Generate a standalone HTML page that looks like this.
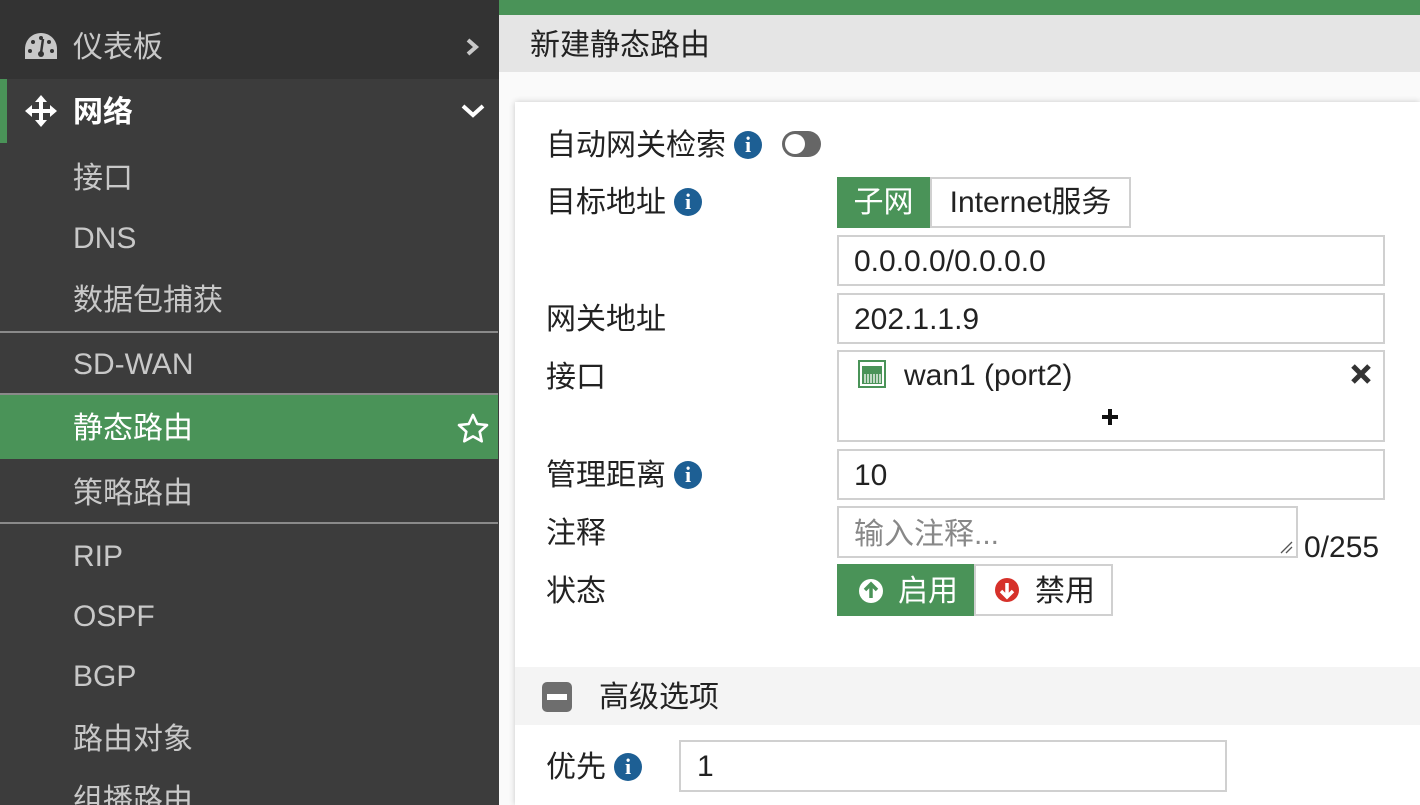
<!DOCTYPE html>
<html><head><meta charset="utf-8"><style>
*{margin:0;padding:0;box-sizing:border-box}
html,body{width:1420px;height:805px;overflow:hidden}
body{position:relative;background:#fafafa;font-family:"Liberation Sans","Noto Sans CJK SC",sans-serif;font-size:30px;color:#222}
.a{position:absolute}
#sb{left:0;top:0;width:499px;height:805px;background:#3c3c3c}
.it{position:absolute;left:73px;color:#c8c8c8;font-size:30px;line-height:34px}
.sep{position:absolute;left:0;width:498px;height:2px;background:#8a8a8a}
.lbl{position:absolute;left:546px;font-size:30px;line-height:34px;color:#222}
.box{position:absolute;border:2px solid #d0d0d0;background:#fff;font-size:30px;padding-left:15px;color:#222}
.info{display:inline-block;width:28px;height:28px;border-radius:50%;background:#1d5f94;color:#fff;font:bold 22px/28px "Liberation Serif",serif;text-align:center;vertical-align:3px;margin-left:8px}
</style></head><body>
<div id="sb" class="a">
 <div class="a" style="left:0;top:0;width:499px;height:79px;background:#333"></div>
 <svg class="a" style="left:25px;top:33px" width="32" height="28" viewBox="0 0 32 28"><path d="M16 0C7 0 0 7 0 16v10h32V16C32 7 25 0 16 0z" fill="#c8c8c8"/><circle cx="5" cy="18" r="2" fill="#333"/><circle cx="8" cy="9" r="2" fill="#333"/><circle cx="27" cy="18" r="2" fill="#333"/><circle cx="24" cy="9" r="2" fill="#333"/><circle cx="16" cy="5" r="2" fill="#333"/><path d="M18 6l-2 14" stroke="#333" stroke-width="2.5"/><circle cx="16" cy="21" r="3" fill="#333"/></svg>
 <div class="it" style="top:31px">仪表板</div>
 <svg class="a" style="left:464px;top:37px" width="16" height="20"><path d="M4 3l8 7-8 7" stroke="#c8c8c8" stroke-width="4" fill="none"/></svg>
 <div class="a" style="left:0;top:79px;width:7px;height:64px;background:#4a9358"></div>
 <svg class="a" style="left:25px;top:95px" width="32" height="32" viewBox="0 0 32 32"><path d="M16 0l6 7h-4v7h7v-4l7 6-7 6v-4h-7v7h4l-6 7-6-7h4v-7H7v4l-7-6 7-6v4h7V7h-4z" fill="#fff"/></svg>
 <div class="it" style="top:96px;color:#fff;font-weight:bold">网络</div>
 <svg class="a" style="left:460px;top:102px" width="26" height="18"><path d="M3 4l10 9 10-9" stroke="#fff" stroke-width="4" fill="none"/></svg>
 <div class="it" style="top:162px">接口</div>
 <div class="it" style="top:222px">DNS</div>
 <div class="it" style="top:284px">数据包捕获</div>
 <div class="sep" style="top:331px"></div>
 <div class="it" style="top:348px">SD-WAN</div>
 <div class="sep" style="top:393px"></div>
 <div class="a" style="left:0;top:395px;width:498px;height:64px;background:#4a9358"></div>
 <div class="it" style="top:412px;color:#fff">静态路由</div>
 <svg class="a" style="left:457px;top:413px" width="32" height="30" viewBox="0 0 32 30"><path d="M16 2l4.2 9 9.8 1.1-7.3 6.6 2 9.6L16 23.4l-8.7 4.9 2-9.6L2 12.1 11.8 11z" stroke="#fff" stroke-width="2.6" fill="none" stroke-linejoin="round"/></svg>
 <div class="it" style="top:477px">策略路由</div>
 <div class="sep" style="top:522px"></div>
 <div class="it" style="top:540px">RIP</div>
 <div class="it" style="top:600px">OSPF</div>
 <div class="it" style="top:660px">BGP</div>
 <div class="it" style="top:723px">路由对象</div>
 <div class="it" style="top:784px">组播路由</div>
</div>
<div class="a" style="left:499px;top:0;width:921px;height:15px;background:#4a9358"></div>
<div class="a" style="left:499px;top:15px;width:921px;height:57px;background:#e5e5e5"></div>
<div class="a" style="left:530px;top:29px;font-size:30px;line-height:34px;color:#222">新建静态路由</div>
<div class="a" style="left:515px;top:102px;width:905px;height:703px;background:#fff;box-shadow:0 0 6px rgba(0,0,0,.2)"></div>
<div class="lbl" style="top:129px">自动网关检索<span class="info">i</span></div>
<div class="a" style="left:782px;top:131px;width:39px;height:26px;border-radius:13px;background:#666"></div>
<div class="a" style="left:785px;top:134px;width:20px;height:20px;border-radius:50%;background:#fff"></div>
<div class="lbl" style="top:186px">目标地址<span class="info">i</span></div>
<div class="a" style="left:837px;top:177px;width:93px;height:51px;background:#4a9358;color:#fff;font-size:30px;line-height:51px;text-align:center">子网</div>
<div class="a" style="left:930px;top:177px;width:201px;height:51px;border:2px solid #d0d0d0;font-size:30px;line-height:47px;text-align:center">Internet服务</div>
<div class="box" style="left:837px;top:235px;width:548px;height:51px;line-height:49px">0.0.0.0/0.0.0.0</div>
<div class="lbl" style="top:303px">网关地址</div>
<div class="box" style="left:837px;top:293px;width:548px;height:51px;line-height:49px">202.1.1.9</div>
<div class="lbl" style="top:361px">接口</div>
<div class="box" style="left:837px;top:350px;width:548px;height:92px"></div>
<svg class="a" style="left:858px;top:360px" width="28" height="28" viewBox="0 0 28 28"><rect x="1" y="1" width="26" height="26" fill="#fff" stroke="#4a9358" stroke-width="2"/><rect x="4" y="6" width="20" height="18" fill="#4a9358"/><path d="M7 14v9M10 14v9M13 14v9M16 14v9M19 14v9M22 14v9" stroke="#fff" stroke-width="1.3"/></svg>
<div class="a" style="left:904px;top:359px;font-size:30px;line-height:34px">wan1 (port2)</div>
<svg class="a" style="left:1349px;top:362px" width="24" height="24"><path d="M4 4l16 16M20 4L4 20" stroke="#333" stroke-width="5"/></svg>
<svg class="a" style="left:1101px;top:408px" width="18" height="18"><path d="M9 1v16M1 9h16" stroke="#111" stroke-width="4"/></svg>
<div class="lbl" style="top:459px">管理距离<span class="info">i</span></div>
<div class="box" style="left:837px;top:449px;width:548px;height:51px;line-height:49px">10</div>
<div class="lbl" style="top:517px">注释</div>
<div class="box" style="left:837px;top:506px;width:461px;height:52px;line-height:54px;color:#888">输入注释...</div>
<svg class="a" style="left:1278px;top:539px" width="16" height="16"><path d="M3 14L14 3M8 14l6-6" stroke="#555" stroke-width="1.3"/></svg>
<div class="a" style="left:1304px;top:531px;font-size:30px;line-height:34px">0/255</div>
<div class="lbl" style="top:575px">状态</div>
<div class="a" style="left:837px;top:564px;width:137px;height:52px;background:#4a9358"></div>
<svg class="a" style="left:858px;top:578px" width="26" height="26" viewBox="0 0 26 26"><circle cx="13" cy="13" r="12" fill="#fff"/><path d="M13 20V7M7 12l6-6 6 6" stroke="#4a9358" stroke-width="3.5" fill="none"/></svg>
<div class="a" style="left:898px;top:575px;color:#fff;font-size:30px;line-height:34px">启用</div>
<div class="a" style="left:974px;top:564px;width:139px;height:52px;border:2px solid #d0d0d0"></div>
<svg class="a" style="left:994px;top:577px" width="26" height="26" viewBox="0 0 26 26"><circle cx="13" cy="13" r="12" fill="#d6312a"/><path d="M13 6v13M7 14l6 6 6-6" stroke="#fff" stroke-width="3.5" fill="none"/></svg>
<div class="a" style="left:1035px;top:575px;font-size:30px;line-height:34px">禁用</div>
<div class="a" style="left:515px;top:667px;width:905px;height:58px;background:#f4f4f4"></div>
<div class="a" style="left:542px;top:682px;width:30px;height:30px;border-radius:5px;background:#6e6e6e"></div>
<div class="a" style="left:547px;top:694px;width:20px;height:6px;background:#fff"></div>
<div class="a" style="left:599px;top:681px;font-size:30px;line-height:34px">高级选项</div>
<div class="lbl" style="top:751px">优先<span class="info">i</span></div>
<div class="box" style="left:679px;top:740px;width:548px;height:52px;line-height:50px;padding-left:16px">1</div>
</body></html>
